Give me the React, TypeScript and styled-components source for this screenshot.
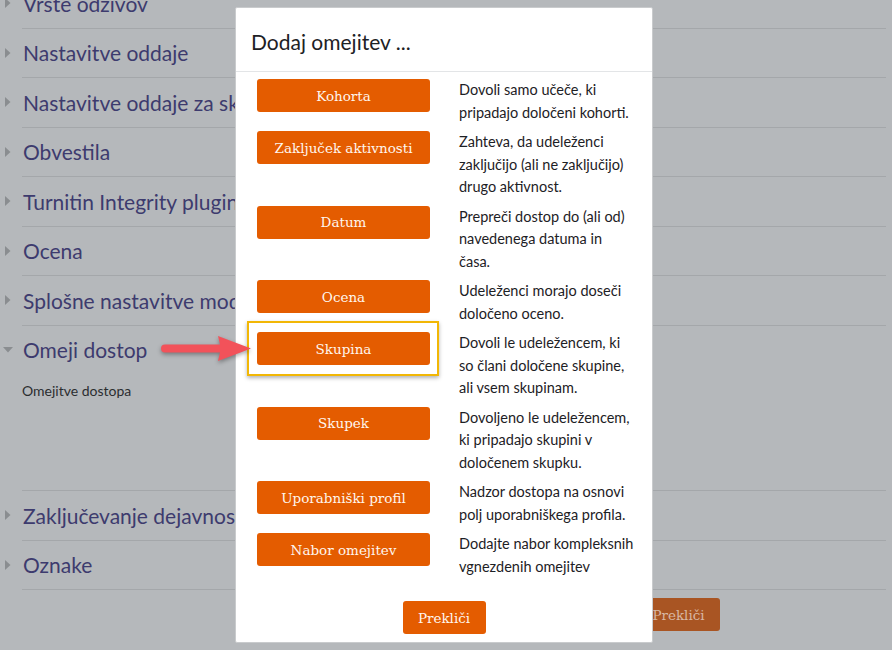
import React from 'react';
import styled, { createGlobalStyle, css } from 'styled-components';

const GlobalStyle = createGlobalStyle`
  html, body {
    margin: 0;
    padding: 0;
    background: #b5b8bb;
    overflow: hidden;
  }
  body {
    font-family: Lato, "Noto Sans", sans-serif;
  }
`;

interface SectionData {
  title: string;
  expanded?: boolean;
}

interface Restriction {
  label: string;
  lines: string[];
  highlighted?: boolean;
}

const sections: SectionData[] = [
  { title: 'Vrste odzivov' },
  { title: 'Nastavitve oddaje' },
  { title: 'Nastavitve oddaje za skupine' },
  { title: 'Obvestila' },
  { title: 'Turnitin Integrity plugin' },
  { title: 'Ocena' },
  { title: 'Splošne nastavitve modula' },
  { title: 'Omeji dostop', expanded: true },
  { title: 'Zaključevanje dejavnosti' },
  { title: 'Oznake' },
];

const restrictions: Restriction[] = [
  { label: 'Kohorta', lines: ['Dovoli samo učeče, ki', 'pripadajo določeni kohorti.'] },
  {
    label: 'Zaključek aktivnosti',
    lines: ['Zahteva, da udeleženci', 'zaključijo (ali ne zaključijo)', 'drugo aktivnost.'],
  },
  { label: 'Datum', lines: ['Prepreči dostop do (ali od)', 'navedenega datuma in', 'časa.'] },
  { label: 'Ocena', lines: ['Udeleženci morajo doseči', 'določeno oceno.'] },
  {
    label: 'Skupina',
    lines: ['Dovoli le udeležencem, ki', 'so člani določene skupine,', 'ali vsem skupinam.'],
    highlighted: true,
  },
  {
    label: 'Skupek',
    lines: ['Dovoljeno le udeležencem,', 'ki pripadajo skupini v', 'določenem skupku.'],
  },
  {
    label: 'Uporabniški profil',
    lines: ['Nadzor dostopa na osnovi', 'polj uporabniškega profila.'],
  },
  { label: 'Nabor omejitev', lines: ['Dodajte nabor kompleksnih', 'vgnezdenih omejitev'] },
];

function Caret({ open }: { open?: boolean }): JSX.Element {
  return (
    <CaretBox>
      {open ? (
        <svg width="10" height="6" viewBox="0 0 10 6">
          <path d="M0 0 L10 0 L5 5.5 Z" fill="#8a8d90" />
        </svg>
      ) : (
        <svg width="6" height="10" viewBox="0 0 6 10">
          <path d="M0 0 L5.5 5 L0 10 Z" fill="#8a8d90" />
        </svg>
      )}
    </CaretBox>
  );
}

export default function App(): JSX.Element {
  return (
    <>
      <GlobalStyle />
      <Page>
        <SectionList>
          {sections.map((s) => (
            <Section key={s.title}>
              <SectionHeader>
                <Caret open={s.expanded} />
                <SectionTitle>{s.title}</SectionTitle>
              </SectionHeader>
              {s.expanded && (
                <SectionBody>
                  <FieldLabel>Omejitve dostopa</FieldLabel>
                </SectionBody>
              )}
            </Section>
          ))}
        </SectionList>
        <FormActions>
          <ActionButton>Prekliči</ActionButton>
        </FormActions>
      </Page>

      <Backdrop>
        <Modal>
          <ModalHeader>
            <ModalTitle>Dodaj omejitev ...</ModalTitle>
          </ModalHeader>
          <ModalBody>
            {restrictions.map((r) => (
              <OptionRow key={r.label}>
                <OptionButton highlighted={r.highlighted}>{r.label}</OptionButton>
                <OptionText>
                  {r.lines.map((line) => (
                    <span key={line}>{line}</span>
                  ))}
                </OptionText>
              </OptionRow>
            ))}
          </ModalBody>
          <ModalFooter>
            <ActionButton>Prekliči</ActionButton>
          </ModalFooter>
        </Modal>
        <Pointer width="96" height="34" viewBox="0 0 96 34">
          <path
            d="M5 12.5 L60 12.5 L58 4 L91 16.5 L58 29 L60 20.5 L5 20.5 A4 4 0 0 1 5 12.5 Z"
            fill="#f2525a"
          />
        </Pointer>
      </Backdrop>
    </>
  );
}

const Page = styled.div`
  position: relative;
  width: 892px;
  height: 650px;
  overflow: hidden;
  background: #b5b8bb;
`;

const SectionList = styled.div`
  margin: -21px 6px 0 22px;
`;

const Section = styled.div`
  border-bottom: 1px solid #a4a7aa;
`;

const SectionHeader = styled.div`
  display: flex;
  align-items: center;
  height: 48.5px;
`;

const CaretBox = styled.span`
  display: flex;
  align-items: center;
  justify-content: center;
  width: 12px;
  margin-left: -20px;
  margin-right: 9px;
`;

const SectionTitle = styled.h3`
  margin: 0;
  font-size: 21px;
  font-weight: 400;
  color: #3d3b6e;
  white-space: nowrap;
`;

const SectionBody = styled.div`
  min-height: 116px;
  box-sizing: border-box;
  padding-top: 6px;
`;

const FieldLabel = styled.div`
  font-size: 14px;
  line-height: 21px;
  color: #2b2d30;
`;

const FormActions = styled.div`
  display: flex;
  padding: 8px 0 0 637px;
`;

const buttonBase = css`
  box-sizing: border-box;
  height: 33px;
  border: none;
  border-radius: 3px;
  font-family: "DejaVu Serif", "Liberation Serif", serif;
  font-size: 13.5px;
  cursor: pointer;
`;

const ActionButton = styled.button`
  ${buttonBase};
  width: 83px;
  padding: 0;
  background: #e45c00;
  color: #fff6ee;

  ${FormActions} & {
    background: #a95523;
    color: #d8b7a3;
  }
`;

const Backdrop = styled.div`
  position: fixed;
  inset: 0;
  padding: 7px 0 0 235px;
`;

const Modal = styled.div`
  box-sizing: border-box;
  width: 418px;
  background: #fff;
  border: 1px solid #c9cbcd;
  border-radius: 2px;
`;

const ModalHeader = styled.div`
  padding: 21px 15px 17px;
  border-bottom: 1px solid #e3e5e7;
`;

const ModalTitle = styled.h5`
  margin: 0;
  font-size: 21px;
  line-height: 25px;
  font-weight: 400;
  color: #1d2125;
`;

const ModalBody = styled.div`
  padding: 7px 12px 0 21px;
`;

const OptionRow = styled.div`
  display: grid;
  grid-template-columns: 173px 1fr;
  column-gap: 29px;
  align-items: start;
  margin-bottom: 7px;
`;

const OptionButton = styled.button<{ highlighted?: boolean }>`
  ${buttonBase};
  position: relative;
  width: 173px;
  background: #e45c00;
  color: #fff6ee;

  ${(p) =>
    p.highlighted &&
    css`
      &::after {
        content: '';
        position: absolute;
        inset: -11px -9px -11px -10px;
        border: 2px solid #f2b705;
        box-shadow: 0 2px 4px rgba(0, 0, 0, 0.3);
        pointer-events: none;
      }
    `}
`;

const OptionText = styled.div`
  display: flex;
  flex-direction: column;
  font-size: 14.5px;
  line-height: 22.5px;
  color: #1d2125;
  white-space: nowrap;
`;

const ModalFooter = styled.div`
  display: flex;
  justify-content: center;
  padding: 16px 0 8px;
`;

const Pointer = styled.svg`
  position: absolute;
  left: 160px;
  top: 332px;
  filter: drop-shadow(0 2px 2px rgba(0, 0, 0, 0.35));
`;
